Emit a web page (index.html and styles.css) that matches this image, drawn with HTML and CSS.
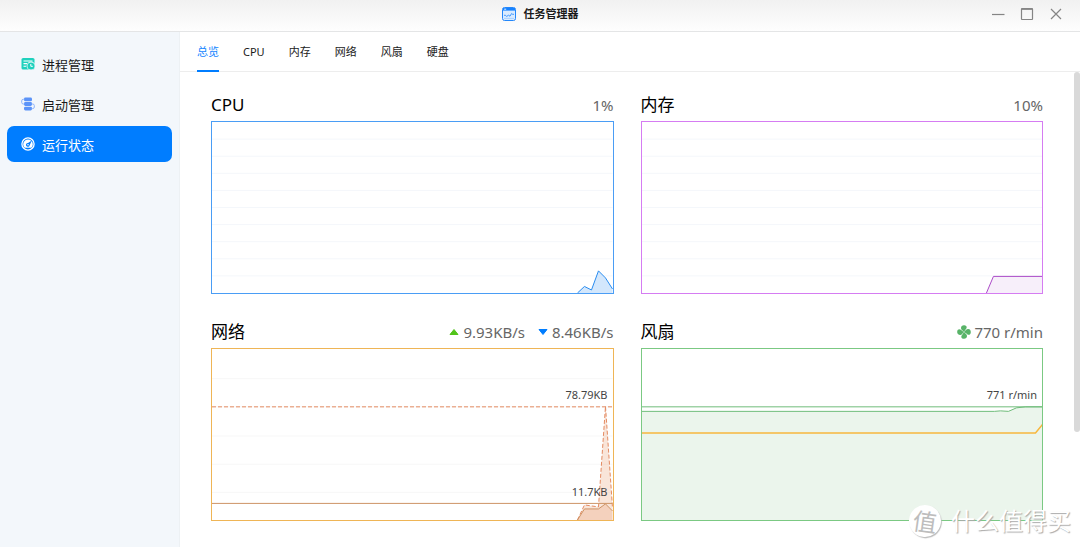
FILE: index.html
```html
<!DOCTYPE html>
<html lang="zh-CN">
<head>
<meta charset="utf-8">
<title>任务管理器</title>
<link rel="stylesheet" href="styles.css">
</head>
<body>
<div class="window">
  <header class="titlebar">
    <h1 class="app-title">
      <svg class="app-icon" viewBox="0 0 14 14"><rect x=".5" y=".5" width="13" height="13" rx="2" fill="#d9ebff" stroke="#2487fa"/><path d="M1 1h12v2.6H1z" fill="#1682ff"/><path d="M2.2 2.2h2" stroke="#fff" stroke-width=".9"/><path d="M2 8.3h1.6l1 1.2 1.8-1.3 1.6 1 1.6-2.7 1 .8H12" fill="none" stroke="#2f8fff" stroke-width=".9"/><path d="M2 11.4h10" stroke="#9bcbff" stroke-width=".8"/></svg>
      任务管理器
    </h1>
    <div class="window-controls">
      <button class="control" aria-label="最小化"><svg viewBox="0 0 14 14"><path d="M1 7.5h12.5"/></svg></button>
      <button class="control" aria-label="最大化"><svg viewBox="0 0 14 14"><rect x="1.5" y="1.5" width="11" height="11" rx=".5"/><path d="M1.500 2.300h11"/></svg></button>
      <button class="control" aria-label="关闭"><svg viewBox="0 0 14 14"><path d="M2 2l10 10M12 2L2 12"/></svg></button>
    </div>
  </header>
  <div class="body">
    <nav class="sidebar">
      <button class="nav-item">
        <svg viewBox="0 0 14 14"><rect x=".5" y="1" width="13" height="11.5" rx="1.6" fill="#1fd1bd"/><path d="M2.5 4h9M2.5 6.600h3.600M2.500 9.300h2.600" stroke="#fff" stroke-width="1.1"/><circle cx="10" cy="9" r="4.400" fill="#f3f7fb"/><circle cx="10" cy="9" r="3.600" fill="#1fd1bd"/><path d="M9.800 7v2.300h2" fill="none" stroke="#fff" stroke-width="1"/></svg>
        进程管理
      </button>
      <button class="nav-item">
        <svg viewBox="0 0 14 14"><g fill="#5b93f8"><rect x="3" y=".5" width="8" height="3.800" rx="1.400"/><rect x="3" y="5.100" width="8" height="3.800" rx="1.400"/><rect x="3" y="9.700" width="8" height="3.800" rx="1.400"/></g><path d="M3.400 2.300H2.300a1.600 1.600 0 0 0-1.600 1.600v1.500A1.600 1.600 0 0 0 2.300 7h1.100M10.600 7h1.100a1.600 1.600 0 0 1 1.600 1.600V10a1.600 1.600 0 0 1-1.600 1.600h-1.100" fill="none" stroke="#8bb2fb" stroke-width="1"/></svg>
        启动管理
      </button>
      <button class="nav-item active" aria-current="page">
        <svg viewBox="0 0 14 14"><circle cx="7" cy="7" r="6.100" fill="none" stroke="#fff" stroke-width="1.300"/><path d="M3.700 10.800A4.800 4.800 0 1 1 10.300 10.800z" fill="#fff"/><path d="M10.800 3.400L8.700 8.200a1.900 1.900 0 1 1-1.700-2.300z" fill="#007dff"/><circle cx="7" cy="7.700" r=".8" fill="#fff"/></svg>
        运行状态
      </button>
    </nav>
    <main class="main">
      <div class="tabs" role="tablist">
        <button class="tab selected" role="tab" aria-selected="true">总览</button>
        <button class="tab" role="tab">CPU</button>
        <button class="tab" role="tab">内存</button>
        <button class="tab" role="tab">网络</button>
        <button class="tab" role="tab">风扇</button>
        <button class="tab" role="tab">硬盘</button>
      </div>
      <div class="content">
        <section class="panel">
          <div class="panel-head"><h2>CPU</h2><div class="stats"><span>1%</span></div></div>
          <div class="chart cpu">
            <svg viewBox="0 0 400 170" preserveAspectRatio="none">
              <path class="grid" d="M0 17h400M0 34h400M0 51h400M0 68h400M0 85h400M0 102h400M0 119h400M0 136h400M0 153h400"/>
              <path class="area" d="M365 170L372 163.500L379 167L386 148L393 155L400 166V170z"/>
              <path class="line" d="M365 170L372 163.500L379 167L386 148L393 155L400 166"/>
            </svg>
          </div>
        </section>
        <section class="panel">
          <div class="panel-head"><h2>内存</h2><div class="stats"><span>10%</span></div></div>
          <div class="chart memory">
            <svg viewBox="0 0 400 170" preserveAspectRatio="none">
              <path class="grid" d="M0 17h400M0 34h400M0 51h400M0 68h400M0 85h400M0 102h400M0 119h400M0 136h400M0 153h400"/>
              <path class="area" d="M344 170L351 153.500H400V170z"/>
              <path class="line" d="M344 170L351 153.500H400"/>
            </svg>
          </div>
        </section>
        <section class="panel">
          <div class="panel-head"><h2>网络</h2>
            <div class="stats">
              <span class="stat"><svg class="arrow" viewBox="0 0 10 8"><path d="M5 1.500L9 6.500H1z" fill="#52c41a" stroke="#52c41a" stroke-linejoin="round"/></svg>9.93KB/s</span>
              <span class="stat"><svg class="arrow" viewBox="0 0 10 8"><path d="M1 1.500H9L5 6.500z" fill="#007dff" stroke="#007dff" stroke-linejoin="round"/></svg>8.46KB/s</span>
            </div>
          </div>
          <div class="chart network">
            <svg viewBox="0 0 400 170" preserveAspectRatio="none">
              <path class="grid" d="M0 29.500h400M0 57.500h400M0 86.500h400M0 114.500h400M0 142.500h400"/>
              <path class="area" d="M365 170L372 155L386 157L393 57L400 158V170z"/>
              <path class="area" d="M365 170L372 159L386 159L393 154L400 161V170z"/>
              <path class="line dashed" d="M0 57.500H400"/>
              <path class="line dashed" d="M365 170L372 155L386 157L393 57L400 158"/>
              <path class="line" d="M0 153.500H400"/>
              <path class="line" d="M365 170L372 159L386 159L393 154L400 161"/>
            </svg>
            <span class="peak upper">78.79KB</span>
            <span class="peak lower">11.7KB</span>
          </div>
        </section>
        <section class="panel">
          <div class="panel-head"><h2>风扇</h2>
            <div class="stats">
              <span class="stat fan-stat"><svg class="fan" viewBox="0 0 14 14"><g fill="#58b368"><path id="blade" d="M6.600 6.800C6.200 5.600 4.200 5.200 4 3.200C3.800 1 5.600 0 7.400.2C9.800.4 10.200 2.400 9.200 3.800C8.400 4.900 7.500 5.600 7.300 6.800z"/><use href="#blade" transform="rotate(90 7 7)"/><use href="#blade" transform="rotate(180 7 7)"/><use href="#blade" transform="rotate(270 7 7)"/></g><circle cx="7" cy="7" r="1.600" fill="#58b368"/><circle cx="7" cy="7" r=".7" fill="#fff"/></svg>770 r/min</span>
            </div>
          </div>
          <div class="chart fans">
            <svg viewBox="0 0 400 170" preserveAspectRatio="none">
              <path class="area" d="M0 62H352L358 61.500L366 62L374 58.500L383 57.500L400 57V170H0z"/>
              <path class="line" d="M0 57.500H400"/>
              <path class="line" d="M0 62H352L358 61.500L366 62L374 58.500L383 57.500H400"/>
              <path class="line second" d="M0 83.500H393L400 75"/>
            </svg>
            <span class="peak upper">771 r/min</span>
          </div>
        </section>
      </div>
      <div class="scroll-thumb"></div>
    </main>
  </div>
  <div class="watermark"><span class="seal">值</span><span>什么值得买</span></div>
</div>
</body>
</html>
```

FILE: styles.css
```css
* { box-sizing: border-box; }

body {
  margin: 0;
  font-family: "Noto Sans", "Noto Sans CJK SC", sans-serif;
  color: #1a1a1a;
  background: #fff;
}

button {
  border: 0;
  background: none;
  padding: 0;
  font: inherit;
  color: inherit;
}

.window {
  position: relative;
  display: flex;
  flex-direction: column;
  height: 100vh;
  overflow: hidden;
}

.titlebar {
  flex: none;
  display: grid;
  grid-template-columns: 1fr auto 1fr;
  align-items: center;
  height: 32px;
  padding: 0 17px 3px;
  border-bottom: 1px solid #e4e5e6;
  background: linear-gradient(#f1f1f1, #fefefe);
}

.app-title {
  grid-column: 2;
  display: flex;
  align-items: center;
  gap: 8px;
  margin: 0;
  font-size: 11px;
  line-height: 16px;
  font-weight: 700;
}

.app-icon { width: 14px; height: 14px; }

.window-controls {
  display: flex;
  justify-content: flex-end;
  gap: 15px;
}

.control { width: 14px; height: 14px; }

.control svg {
  display: block;
  width: 14px;
  height: 14px;
  fill: none;
  stroke: #858585;
  stroke-width: 1.2;
}

.body { flex: 1; display: flex; min-height: 0; }

.sidebar {
  flex: none;
  display: flex;
  flex-direction: column;
  gap: 4px;
  width: 180px;
  padding: 14px 7px 0;
  border-right: 1px solid #edf1f4;
  background: #f3f7fb;
}

.nav-item {
  display: flex;
  align-items: center;
  gap: 7px;
  height: 36px;
  padding: 0 14px;
  border-radius: 7px;
  font-size: 13px;
}

.nav-item svg { width: 14px; height: 14px; }

.nav-item.active { background: #007dff; color: #fff; }

.main {
  position: relative;
  flex: 1;
  display: flex;
  flex-direction: column;
  min-width: 0;
}

.tabs {
  flex: none;
  display: flex;
  gap: 24px;
  height: 40px;
  padding-left: 17px;
  border-bottom: 1px solid #ededed;
}

.tab {
  height: 40px;
  border-bottom: 2px solid transparent;
  font-size: 11px;
}

.tab.selected { color: #1485ff; border-bottom-color: #007dff; }

.content {
  flex: 1;
  display: grid;
  grid-template-columns: 1fr 1fr;
  align-content: start;
  gap: 20px 27px;
  padding: 16px 37px 0 31px;
  overflow: hidden;
}

.panel-head {
  display: flex;
  align-items: center;
  justify-content: space-between;
  height: 34px;
}

.panel-head h2 {
  margin: 0;
  font-size: 17px;
  line-height: 24px;
  font-weight: 400;
  color: #000;
}

.stats {
  display: flex;
  gap: 13px;
  font-size: 15px;
  line-height: 24px;
  color: #666;
}

.stat { display: flex; align-items: center; gap: 4px; }

.fan-stat { gap: 3px; }

.arrow { width: 10px; height: 8px; }

.fan { width: 14px; height: 14px; }

.chart {
  position: relative;
  height: 173px;
  margin-top: -1px;
  margin-bottom: 1px;
  border: 1px solid;
}

.chart svg { display: block; width: 100%; height: 100%; }

.chart path { vector-effect: non-scaling-stroke; fill: none; }

.chart .grid { stroke: #f4f7fb; }

.chart.cpu { border-color: #4a9df5; }
.cpu .line { stroke: #2a8df0; }
.chart.cpu .area { fill: #d3e7fc; }

.chart.memory { border-color: #d57cf2; }
.memory .line { stroke: #ac4bc8; }
.chart.memory .area { fill: #f7effa; }

.chart.network { border-color: #efb556; }
.chart.network .grid { stroke: #f7f7f7; }
.network .line { stroke: #cd9365; }
.network .dashed { stroke: #e48b62; stroke-dasharray: 4 2; }
.chart.network .area { fill: #e99a6c; fill-opacity: .26; }

.chart.fans { border-color: #7bc983; }
.fans .line { stroke: #70bd7b; }
.chart.fans .area { fill: #ebf5ec; }
.fans .second { stroke: #f8b73e; stroke-width: 1.5; }

.peak {
  position: absolute;
  right: 5px;
  font-size: 11px;
  line-height: 16px;
  color: #444;
}

.peak.upper { top: 38px; }
.peak.lower { top: 135px; }

.scroll-thumb {
  position: absolute;
  top: 40px;
  right: 0;
  width: 6px;
  height: 76%;
  max-height: 360px;
  border-radius: 3px;
  background: #d9d9d9;
}

.watermark {
  position: absolute;
  right: 9px;
  bottom: 9px;
  display: flex;
  align-items: center;
  gap: 10px;
  font-size: 24px;
  line-height: 34px;
  color: #fff;
  text-shadow: 1px 1px 1px #aaa;
}

.seal {
  display: grid;
  place-items: center;
  width: 32px;
  height: 32px;
  border-radius: 50%;
  background: #fff;
  box-shadow: 1px 1px 1px #bbb;
  font-size: 24px;
  color: #bdbdbd;
  text-shadow: none;
  transform: rotate(8deg);
}
```
